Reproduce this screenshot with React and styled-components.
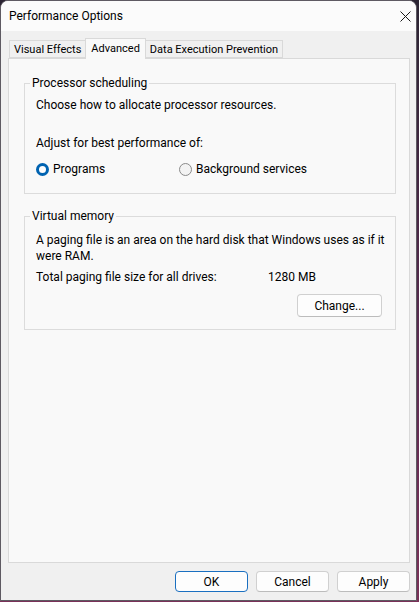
import React, { useState } from "react";
import styled, { createGlobalStyle } from "styled-components";

const GlobalStyle = createGlobalStyle`
  html, body {
    margin: 0;
    padding: 0;
    height: 100%;
    background: #4a2c4c;
  }
  body {
    font-family: Roboto, "Noto Sans", "Liberation Sans", sans-serif;
    font-size: 12px;
    color: #000;
  }
  #root {
    height: 100%;
  }
`;

const Desktop = styled.div`
  height: 602px;
  width: 419px;
  background: linear-gradient(180deg, #2b2433 0%, #5b2a50 60%, #7a3158 100%);
`;

const Window = styled.div`
  box-sizing: border-box;
  width: 417px;
  height: 601px;
  border: 1px solid #5e5a62;
  border-radius: 8px 8px 0 0;
  overflow: hidden;
  display: flex;
  flex-direction: column;
  background: #f0f0f0;
`;

const TitleBar = styled.div`
  height: 30px;
  flex: none;
  background: #fbfbfb;
  display: flex;
  align-items: center;
  justify-content: space-between;
  padding: 0 5px 0 8px;
`;

const Title = styled.span`
  font-size: 12px;
  line-height: 16px;
`;

const CloseButton = styled.button`
  width: 12px;
  height: 12px;
  border: 0;
  padding: 0;
  background: transparent;
  display: flex;
  align-items: center;
  justify-content: center;
`;

const Body = styled.div`
  flex: 1;
  display: flex;
  flex-direction: column;
  padding: 7px 6px 0 7px;
`;

const TabStrip = styled.div`
  display: flex;
  align-items: flex-end;
  height: 20px;
  padding-left: 1px;
  position: relative;
  z-index: 1;
`;

const Tab = styled.div`
  box-sizing: border-box;
  height: ${(p) => (p.$active ? "21px" : "18px")};
  margin-bottom: ${(p) => (p.$active ? "-1px" : "0")};
  padding: 0 ${(p) => (p.$active ? "5px" : "4px")};
  display: flex;
  align-items: center;
  border: 1px solid #d9d9d9;
  border-bottom: ${(p) => (p.$active ? "0" : "1px solid #d9d9d9")};
  border-left: ${(p) => (p.$first || p.$active ? "1px solid #d9d9d9" : "0")};
  border-right: ${(p) => (p.$beforeActive ? "0" : "1px solid #d9d9d9")};
  background: ${(p) => (p.$active ? "#f9f9f9" : "#f0f0f0")};
  font-size: 11px;
  line-height: 16px;
  padding-top: ${(p) => (p.$active ? "0" : "1px")};
  white-space: nowrap;
`;

const Panel = styled.div`
  box-sizing: border-box;
  flex: 1;
  border: 1px solid #d9d9d9;
  background: #f9f9f9;
  padding: 16px 13px 0 15px;
  display: flex;
  flex-direction: column;
  gap: 14px;
`;

const Group = styled.fieldset`
  margin: 0;
  border: 1px solid #dcdcdc;
  padding: ${(p) => p.$pad};
  display: flex;
  flex-direction: column;
`;

const Legend = styled.legend`
  padding: 0 2px;
  margin-left: -6px;
  font-size: 12px;
  line-height: 16px;
`;

const Line = styled.div`
  font-size: 12px;
  line-height: 16px;
  margin-top: ${(p) => p.$gap || 0}px;
`;

const RadioRow = styled.div`
  display: flex;
  margin-top: 10px;
`;

const RadioLabel = styled.label`
  display: flex;
  align-items: center;
  gap: 4px;
  width: ${(p) => (p.$width ? `${p.$width}px` : "auto")};
  line-height: 16px;
  cursor: default;
`;

const RadioDot = styled.span`
  box-sizing: border-box;
  width: 13px;
  height: 13px;
  border-radius: 50%;
  flex: none;
  background: #fdfdfd;
  border: ${(p) => (p.$checked ? "3.5px solid #0063b1" : "1px solid #8a8a8a")};
  ${(p) => !p.$checked && "background: #f3f3f3;"}
`;

const InfoRow = styled.div`
  display: flex;
  line-height: 16px;
  margin-top: 5px;
`;

const InfoLabel = styled.span`
  width: 232px;
`;

const RightRow = styled.div`
  display: flex;
  justify-content: flex-end;
  margin-top: 9px;
  padding-right: 9px;
`;

const Button = styled.button`
  box-sizing: border-box;
  width: ${(p) => p.$w || 73}px;
  height: ${(p) => p.$h || 21}px;
  border-radius: 4px;
  border: 1px solid ${(p) => (p.$primary ? "#1a6fc0" : "#d0d0d0")};
  border-bottom-color: ${(p) => (p.$primary ? "#1a6fc0" : "#bcbcbc")};
  background: #fdfdfd;
  font-family: inherit;
  font-size: 12px;
  color: #000;
  padding: 0;
`;

const Footer = styled.div`
  display: flex;
  justify-content: flex-end;
  gap: 8px;
  padding: 8px 0 8px 0;
`;

const Radio = ({ checked, label, width, onSelect }) => (
  <RadioLabel $width={width} onClick={onSelect}>
    <RadioDot $checked={checked} />
    <span>{label}</span>
  </RadioLabel>
);

export default function App() {
  const [mode, setMode] = useState("programs");

  return (
    <Desktop>
      <GlobalStyle />
      <Window>
        <TitleBar>
          <Title>Performance Options</Title>
          <CloseButton aria-label="Close">
            <svg width="11" height="11" viewBox="0 0 11 11">
              <path d="M0.5 0.5 L10.5 10.5 M10.5 0.5 L0.5 10.5" stroke="#1a1a1a" strokeWidth="1" />
            </svg>
          </CloseButton>
        </TitleBar>
        <Body>
          <TabStrip>
            <Tab $first $beforeActive>Visual Effects</Tab>
            <Tab $active>Advanced</Tab>
            <Tab>Data Execution Prevention</Tab>
          </TabStrip>
          <Panel>
            <Group $pad="6px 12px 16px 11px">
              <Legend>Processor scheduling</Legend>
              <Line>Choose how to allocate processor resources.</Line>
              <Line $gap={22}>Adjust for best performance of:</Line>
              <RadioRow>
                <Radio
                  width={143}
                  label="Programs"
                  checked={mode === "programs"}
                  onSelect={() => setMode("programs")}
                />
                <Radio
                  label="Background services"
                  checked={mode === "services"}
                  onSelect={() => setMode("services")}
                />
              </RadioRow>
            </Group>
            <Group $pad="8px 4px 12px 11px">
              <Legend>Virtual memory</Legend>
              <Line>A paging file is an area on the hard disk that Windows uses as if it were RAM.</Line>
              <InfoRow>
                <InfoLabel>Total paging file size for all drives:</InfoLabel>
                <span>1280 MB</span>
              </InfoRow>
              <RightRow>
                <Button $w={85} $h={23}>Change...</Button>
              </RightRow>
            </Group>
          </Panel>
          <Footer>
            <Button $primary>OK</Button>
            <Button>Cancel</Button>
            <Button>Apply</Button>
          </Footer>
        </Body>
      </Window>
    </Desktop>
  );
}
